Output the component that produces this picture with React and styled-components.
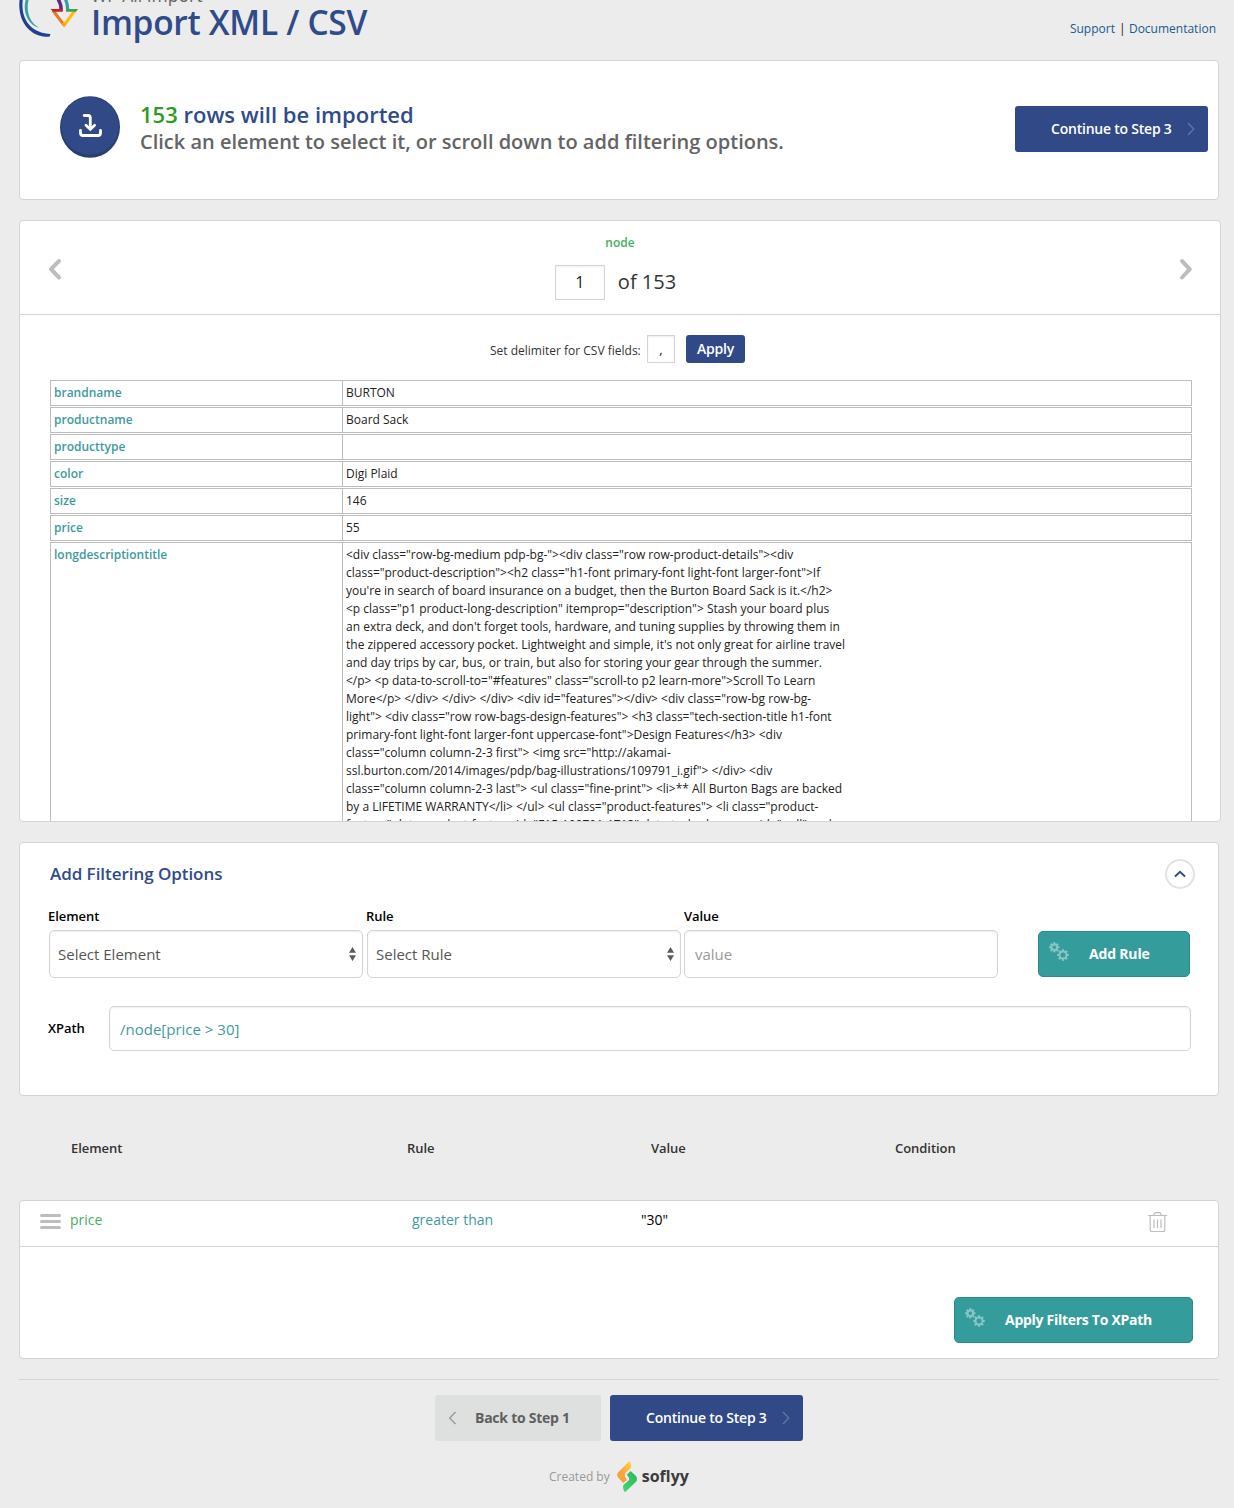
import React from "react";
import styled, { createGlobalStyle } from "styled-components";

const Global = createGlobalStyle`
  * { box-sizing: border-box; }
  body { margin: 0; background: #ececec; font-family: "Open Sans", sans-serif; color: #333; }
  input, button { font-family: inherit; margin: 0; }
`;

const Page = styled.div`
  width: 1234px;
  height: 1508px;
  padding-left: 19px;
  overflow: hidden;
`;

const Header = styled.header`
  display: flex;
  width: 1200px;
  height: 60px;
  overflow: hidden;
`;
const LogoMark = styled.svg`
  width: 60px;
  height: 40px;
  flex: none;
  margin-right: 12px;
`;
const Titles = styled.div`
  flex: 1;
  margin-top: -15px;
  white-space: nowrap;
`;
const Brand = styled.div`
  height: 20px;
  font-size: 17.5px;
  line-height: 20px;
  color: #646569;
`;
const Title = styled.h1`
  margin: 0;
  font-size: 33.5px;
  line-height: 34px;
  font-weight: 600;
  color: #2f4b8a;
  letter-spacing: -0.3px;
`;
const TopLinks = styled.nav`
  display: flex;
  gap: 4px;
  padding: 20px 3px 0 0;
  font-size: 12px;
  line-height: 18px;
  color: #222;
  a { color: #1a5a8e; text-decoration: none; }
  span { width: 6px; text-align: center; }
`;

const Card = styled.section`
  width: ${(p) => p.$w || 1200}px;
  height: ${(p) => p.$h}px;
  margin-bottom: ${(p) => p.$mb || 0}px;
  background: #fff;
  border: 1px solid #d4d4d4;
  border-radius: 4px;
  overflow: hidden;
`;

const Summary = styled(Card)`
  display: flex;
  padding: 35px 10px 0 40px;
`;
const SummaryText = styled.div`
  flex: 1;
  margin: 5px 0 0 20px;
  white-space: nowrap;
`;
const RowsLine = styled.div`
  font-size: 22px;
  line-height: 27px;
  font-weight: 600;
  color: #2f4b8a;
  span { color: #2d9b20; }
`;
const HintLine = styled.div`
  font-size: 20px;
  line-height: 27px;
  font-weight: 600;
  color: #646464;
`;

const BigButton = styled.button`
  display: flex;
  align-items: center;
  flex: none;
  width: ${(p) => p.$w}px;
  height: 46px;
  padding: 0;
  border: ${(p) => (p.$tone === "teal" ? "1px solid #2b8a8a" : "0")};
  border-radius: ${(p) => (p.$tone === "teal" ? 5 : 3)}px;
  background: ${(p) => ({ blue: "#314a87", teal: "#359c9c", grey: "#dde0df" })[p.$tone]};
  color: ${(p) => (p.$tone === "grey" ? "#5f5f5f" : "#fff")};
  font-size: 14px;
  line-height: 20px;
  font-weight: ${(p) => (p.$tone === "blue" ? 600 : 700)};
  letter-spacing: ${(p) => p.$ls || 0}px;
  white-space: nowrap;
  text-align: left;
`;
const ContinueLabel = styled.span`
  width: 136px;
  margin-left: 36px;
`;
const BackLabel = styled.span`
  margin-left: 18px;
`;
const GearLabel = styled.span`
  margin-left: 18px;
`;
const ButtonOffset = styled.div`
  margin-top: 10px;
`;
const RaisedButton = styled.div`
  margin-bottom: 1px;
`;
const BackIcon = styled.span`
  width: 9px;
  margin-left: 13px;
  line-height: 0;
`;
const GearIcon = styled.span`
  width: 22px;
  height: 22px;
  margin: -5px 0 0 10px;
  line-height: 0;
`;

const Pager = styled.div`
  display: flex;
  justify-content: space-between;
  height: 94px;
  padding: 36px 27px 0 28px;
  border-bottom: 1px solid #d4d4d4;
`;
const PagerMiddle = styled.div`
  display: flex;
  flex-direction: column;
  align-items: center;
  margin-top: -24px;
  padding-right: 10px;
`;
const NodeName = styled.div`
  height: 32px;
  padding-left: 9px;
  font-size: 12px;
  line-height: 20px;
  font-weight: 600;
  color: #46af5a;
`;
const Inline = styled.div`
  display: flex;
  align-items: center;
`;
const SmallInput = styled.input`
  width: ${(p) => p.$w}px;
  height: ${(p) => p.$h}px;
  padding: 0 0 1px;
  border: 1px solid #d4d4d4;
  box-shadow: inset 0 1px 2px rgba(0, 0, 0, 0.07);
  background: #fff;
  text-align: center;
  font-size: ${(p) => p.$fs}px;
  color: #222;
`;
const OfCount = styled.div`
  margin-left: 13px;
  margin-top: -2px;
  font-size: 20px;
  line-height: 28px;
  color: #333;
`;

const Delimiter = styled.div`
  display: flex;
  padding: 20px 0 0 470px;
  height: 65px;
`;
const DelimiterLabel = styled.label`
  width: 157px;
  padding-top: 7px;
  font-size: 12px;
  line-height: 18px;
  white-space: nowrap;
`;
const ApplyButton = styled.button`
  width: 59px;
  height: 28px;
  margin-left: 11px;
  padding: 0;
  border: 0;
  border-radius: 3px;
  background: #314a87;
  color: #fff;
  font-size: 14px;
  line-height: 20px;
  font-weight: 600;
  letter-spacing: -0.2px;
`;

const Records = styled.div`
  display: flex;
  flex-direction: column;
  gap: 1px;
  width: 1142px;
  margin-left: 30px;
`;
const Record = styled.div`
  display: flex;
  min-height: 26px;
  border: 1px solid #bdbdbd;
  font-size: 12px;
  line-height: 18px;
`;
const FieldName = styled.div`
  width: 292px;
  padding: 3px 3px 2px;
  border-right: 1px solid #bdbdbd;
  font-weight: 600;
  color: #3d9b9b;
`;
const FieldValue = styled.div`
  padding: 3px 3px 2px;
  white-space: pre;
  color: #222;
`;

const FilterHead = styled.div`
  display: flex;
  justify-content: space-between;
  padding: 16px 23px 0 30px;
  height: 62px;
`;
const FilterTitle = styled.h2`
  margin: 0;
  font-size: 17px;
  line-height: 30px;
  font-weight: 600;
  letter-spacing: -0.05px;
  color: #2f4b8a;
`;
const Collapse = styled.button`
  display: flex;
  align-items: center;
  justify-content: center;
  width: 30px;
  height: 30px;
  padding: 0;
  border: 2px solid #e2e2e2;
  border-radius: 50%;
  background: #fff;
`;
const FilterRow = styled.div`
  display: flex;
  align-items: flex-end;
  padding-left: 29px;
  height: 73px;
`;
const Field = styled.div`
  width: ${(p) => p.$w}px;
`;
const Label = styled.label`
  display: block;
  margin-left: ${(p) => p.$ml || 0}px;
  height: 24px;
  font-size: 13px;
  line-height: 20px;
  font-weight: 600;
  letter-spacing: -0.05px;
  color: #000;
`;
const boxed = `
  height: 48px;
  border: 1px solid #d4d4d4;
  border-radius: 5px;
  box-shadow: inset 0 1px 2px rgba(0, 0, 0, 0.07);
  background: #fff;
  font-size: 15px;
`;
const SelectBox = styled.div`
  ${boxed}
  display: flex;
  align-items: center;
  justify-content: space-between;
  width: 314px;
  padding: 0 6px 0 8px;
  color: #555;
`;
const ValueInput = styled.input`
  ${boxed}
  display: block;
  width: 314px;
  padding: 0 10px;
  &::placeholder { color: #999; opacity: 1; }
`;
const XPathRow = styled.div`
  display: flex;
  padding: 28px 0 0 28px;
`;
const XPathLabel = styled(Label)`
  width: 61px;
  margin: 12px 0 0;
`;
const XPathInput = styled.input`
  ${boxed}
  width: 1082px;
  height: 45px;
  padding: 1px 10px 0;
  color: #3d9b9b;
`;

const Columns = styled.div`
  display: grid;
  grid-template-columns: 336px 244px 244px 1fr;
  height: 104px;
  padding: 42px 0 0 52px;
  font-size: 13px;
  line-height: 20px;
  font-weight: 600;
  letter-spacing: -0.05px;
`;
const RuleRow = styled.div`
  display: grid;
  grid-template-columns: 30px 342px 229px 507px auto;
  height: 46px;
  padding-left: 20px;
  border-bottom: 1px solid #d4d4d4;
  font-size: 14px;
  line-height: 20px;
`;
const RuleText = styled.div`
  padding-top: 9px;
  color: ${(p) => p.$c};
`;
const IconCell = styled.div`
  padding-top: ${(p) => p.$pt}px;
  line-height: 0;
`;
const ApplyWrap = styled.div`
  display: flex;
  justify-content: flex-end;
  padding: 50px 25px 0 0;
`;

const Actions = styled.footer`
  width: 1200px;
  border-top: 1px solid #d4d4d4;
`;
const ActionButtons = styled.div`
  display: flex;
  gap: 9px;
  padding: 15px 0 0 416px;
`;
const Credit = styled.div`
  display: flex;
  align-items: center;
  padding: 20px 0 0 530px;
  font-size: 12px;
  line-height: 32px;
  color: #999;
  svg { margin: 0 5px 0 7px; }
`;
const Soflyy = styled.span`
  margin-top: -3px;
  font-size: 16px;
  font-weight: 700;
  color: #3b3b3b;
`;

const Chevron = ({ w, h, d, color, sw, cap }) => (
  <svg width={w} height={h} viewBox={`0 0 ${w} ${h}`} fill="none" stroke={color} strokeWidth={sw} strokeLinecap={cap || "butt"} strokeLinejoin={cap || "miter"}>
    <path d={d} />
  </svg>
);

const gearTeeth = [0, 45, 90, 135, 180, 225, 270, 315];
const Gear = ({ x, y, r }) => (
  <g transform={`translate(${x} ${y})`}>
    <circle r={r} fill="none" stroke="#86c5c4" strokeWidth="2" />
    {gearTeeth.map((a) => (
      <rect key={a} x="-1.1" y={-r - 2.3} width="2.2" height="2" fill="#86c5c4" transform={`rotate(${a})`} />
    ))}
  </g>
);
const Gears = () => (
  <svg width="22" height="22" viewBox="0 0 22 22">
    <Gear x={5.3} y={6.3} r={2.8} />
    <Gear x={14} y={14} r={3.5} />
  </svg>
);

const GearButton = ({ w, ls, children }) => (
  <BigButton $tone="teal" $w={w} $ls={ls}>
    <GearIcon><Gears /></GearIcon>
    <GearLabel>{children}</GearLabel>
  </BigButton>
);

const Continue = () => (
  <BigButton $tone="blue" $w={193} $ls={-0.22}>
    <ContinueLabel>Continue to Step 3</ContinueLabel>
    <Chevron w={9} h={14} d="M1 1L6.8 7L1 13" color="#6478a8" sw={1.2} />
  </BigButton>
);

const Arrows = () => (
  <svg width="7" height="14" viewBox="0 0 7 14" fill="#5c5c5c">
    <path d="M0 5.8L3.5 0L7 5.8zM0 8.2L3.5 14L7 8.2z" />
  </svg>
);

const records = [
  ["brandname", "BURTON"],
  ["productname", "Board Sack"],
  ["producttype", ""],
  ["color", "Digi Plaid"],
  ["size", "146"],
  ["price", "55"],
  [
    "longdescriptiontitle",
    [
      `<div class="row-bg-medium pdp-bg-"><div class="row row-product-details"><div`,
      `class="product-description"><h2 class="h1-font primary-font light-font larger-font">If`,
      `you're in search of board insurance on a budget, then the Burton Board Sack is it.</h2>`,
      `<p class="p1 product-long-description" itemprop="description"> Stash your board plus`,
      `an extra deck, and don't forget tools, hardware, and tuning supplies by throwing them in`,
      `the zippered accessory pocket. Lightweight and simple, it's not only great for airline travel`,
      `and day trips by car, bus, or train, but also for storing your gear through the summer.`,
      `</p> <p data-to-scroll-to="#features" class="scroll-to p2 learn-more">Scroll To Learn`,
      `More</p> </div> </div> </div> <div id="features"></div> <div class="row-bg row-bg-`,
      `light"> <div class="row row-bags-design-features"> <h3 class="tech-section-title h1-font`,
      `primary-font light-font larger-font uppercase-font">Design Features</h3> <div`,
      `class="column column-2-3 first"> <img src="http://akamai-`,
      `ssl.burton.com/2014/images/pdp/bag-illustrations/109791_i.gif"> </div> <div`,
      `class="column column-2-3 last"> <ul class="fine-print"> <li>** All Burton Bags are backed`,
      `by a LIFETIME WARRANTY</li> </ul> <ul class="product-features"> <li class="product-`,
      `feature" data-product-feature-id="F15-109791-1713" data-techadvance-guid="null"> rel=`,
    ].join("\n"),
  ],
];

export default function App() {
  return (
    <Page>
      <Global />
      <Header>
        <LogoMark viewBox="0 0 60 40" fill="none">
          <path d="M.8 -2C-2.5 20 10 37.5 30.5 36.8L31.5 34C14 33.5 .5 21 4 -2Z" fill="#223f96" />
          <path d="M7.2 -2C2.5 12 9.5 25 20 27.8C11 22.5 6.2 12 10 -2Z" fill="#36a3a0" />
          <path d="M36.5 -4Q42 1 42.3 10.5" stroke="#5b2b84" strokeWidth="3.5" />
          <path d="M44.5 -4Q49 2 48.6 10.5" stroke="#2ea2a0" strokeWidth="3.2" />
          <path d="M34 10.5L45 25" stroke="#e57a1c" strokeWidth="3" />
          <path d="M56.3 10L45 25.5" stroke="#fabb13" strokeWidth="3" />
          <path d="M43 23L45 27.7L47 24.5L45 22Z" fill="#f6a81a" />
          <path d="M31.5 9H43.8V11.8H34Z" fill="#c5202c" />
          <path d="M47 9H59L57 11.8H47Z" fill="#43a047" />
        </LogoMark>
        <Titles>
          <Brand>WP All Import</Brand>
          <Title>Import XML / CSV</Title>
        </Titles>
        <TopLinks>
          <a>Support</a>
          <span>|</span>
          <a>Documentation</a>
        </TopLinks>
      </Header>

      <Summary $h={140} $mb={20}>
        <svg width="60" height="62" viewBox="0 0 60 62" fill="none">
          <ellipse cx="30" cy="31" rx="30" ry="30.8" fill="#293d70" />
          <circle cx="30" cy="29.8" r="28.8" fill="#314a87" />
          <g stroke="#fff" strokeWidth="2.8" strokeLinecap="round">
            <path d="M24.2 19.5H28Q30.3 19.5 30.3 22V32" />
            <path d="M26 29.2L30.3 33.4L34.6 29.2" />
            <path d="M20.5 34.5V37Q20.5 39.5 23 39.5H38Q40.5 39.5 40.5 37V34.5" />
          </g>
        </svg>
        <SummaryText>
          <RowsLine><span>153</span> rows will be imported</RowsLine>
          <HintLine>Click an element to select it, or scroll down to add filtering options.</HintLine>
        </SummaryText>
        <ButtonOffset><Continue /></ButtonOffset>
      </Summary>

      <Card $w={1202} $h={602} $mb={20}>
        <Pager>
          <Chevron w={14} h={24} d="M11 4L3 12.2L11 20.5" color="#bdbdbd" sw={4} cap="round" />
          <PagerMiddle>
            <NodeName>node</NodeName>
            <Inline>
              <SmallInput $w={50} $h={35} $fs={16} defaultValue="1" />
              <OfCount>of 153</OfCount>
            </Inline>
          </PagerMiddle>
          <Chevron w={14} h={24} d="M3 4L10.8 12.2L3 20.5" color="#bdbdbd" sw={4} cap="round" />
        </Pager>
        <Delimiter>
          <DelimiterLabel>Set delimiter for CSV fields:</DelimiterLabel>
          <SmallInput $w={28} $h={28} $fs={13} defaultValue="," />
          <ApplyButton>Apply</ApplyButton>
        </Delimiter>
        <Records>
          {records.map(([name, value]) => (
            <Record key={name}>
              <FieldName>{name}</FieldName>
              <FieldValue>{value}</FieldValue>
            </Record>
          ))}
        </Records>
      </Card>

      <Card $h={254}>
        <FilterHead>
          <FilterTitle>Add Filtering Options</FilterTitle>
          <Collapse>
            <Chevron w={12} h={8} d="M1 6.5L6 1.8L11 6.5" color="#314a87" sw={1.9} />
          </Collapse>
        </FilterHead>
        <FilterRow>
          <Field $w={318}>
            <Label $ml={-1}>Element</Label>
            <SelectBox>Select Element<Arrows /></SelectBox>
          </Field>
          <Field $w={317}>
            <Label $ml={-1}>Rule</Label>
            <SelectBox>Select Rule<Arrows /></SelectBox>
          </Field>
          <Field $w={354}>
            <Label>Value</Label>
            <ValueInput placeholder="value" />
          </Field>
          <RaisedButton>
            <GearButton w={152} ls={-0.18}>Add Rule</GearButton>
          </RaisedButton>
        </FilterRow>
        <XPathRow>
          <XPathLabel>XPath</XPathLabel>
          <XPathInput defaultValue="/node[price > 30]" />
        </XPathRow>
      </Card>

      <Columns>
        <span>Element</span>
        <span>Rule</span>
        <span>Value</span>
        <span>Condition</span>
      </Columns>

      <Card $h={159} $mb={20}>
        <RuleRow>
          <IconCell $pt={13}>
            <svg width="21" height="15" viewBox="0 0 21 15" fill="#bdbdbd">
              <rect width="21" height="3" rx="1.5" />
              <rect y="6" width="21" height="3" rx="1.5" />
              <rect y="12" width="21" height="3" rx="1.5" />
            </svg>
          </IconCell>
          <RuleText $c="#46af5a">price</RuleText>
          <RuleText $c="#3d9b9b">greater than</RuleText>
          <RuleText $c="#000">"30"</RuleText>
          <IconCell $pt={11}>
            <svg width="19" height="21" viewBox="0 0 19 21" fill="none" stroke="#bdbdbd" strokeWidth="1.2">
              <path d="M0 3.5H19M5.5 3.5L7 .6H12L13.5 3.5M2.2 4V17.9Q2.2 19.5 3.8 19.5H15.2Q16.8 19.5 16.8 17.9V4M6 7.5V16M9.5 7.5V16M13 7.5V16" />
            </svg>
          </IconCell>
        </RuleRow>
        <ApplyWrap>
          <GearButton w={239} ls={-0.28}>Apply Filters To XPath</GearButton>
        </ApplyWrap>
      </Card>

      <Actions>
        <ActionButtons>
          <BigButton $tone="grey" $w={166} $ls={-0.25}>
            <BackIcon>
              <Chevron w={9} h={14} d="M7.5 1L1.7 7L7.5 13" color="#999" sw={1.4} />
            </BackIcon>
            <BackLabel>Back to Step 1</BackLabel>
          </BigButton>
          <Continue />
        </ActionButtons>
        <Credit>
          Created by
          <svg width="20" height="32" viewBox="0 0 20 32">
            <defs>
              <linearGradient id="flame" x1="1" y1="0" x2="0" y2="1">
                <stop offset="0" stopColor="#fcd93c" />
                <stop offset="0.6" stopColor="#f9a03f" />
              </linearGradient>
              <linearGradient id="leaf" x1="1" y1="0" x2="0" y2="1">
                <stop offset="0" stopColor="#2fb457" />
                <stop offset="1" stopColor="#43d877" />
              </linearGradient>
            </defs>
            <path d="M12.5 0Q14.8 3 13.8 7L8.6 12Q7.2 14 8.6 16.5L10 19L6.2 22L1 16.5Q-.8 14 1.2 11.3Z" fill="url(#flame)" />
            <path d="M13.5 10L19 15Q20.8 17.5 19.3 20.5L8 31.3Q5 27.5 6.5 24L11.6 19.5Q12.8 17.8 11.4 16L9.8 13.6Z" fill="url(#leaf)" />
          </svg>
          <Soflyy>soflyy</Soflyy>
        </Credit>
      </Actions>
    </Page>
  );
}
